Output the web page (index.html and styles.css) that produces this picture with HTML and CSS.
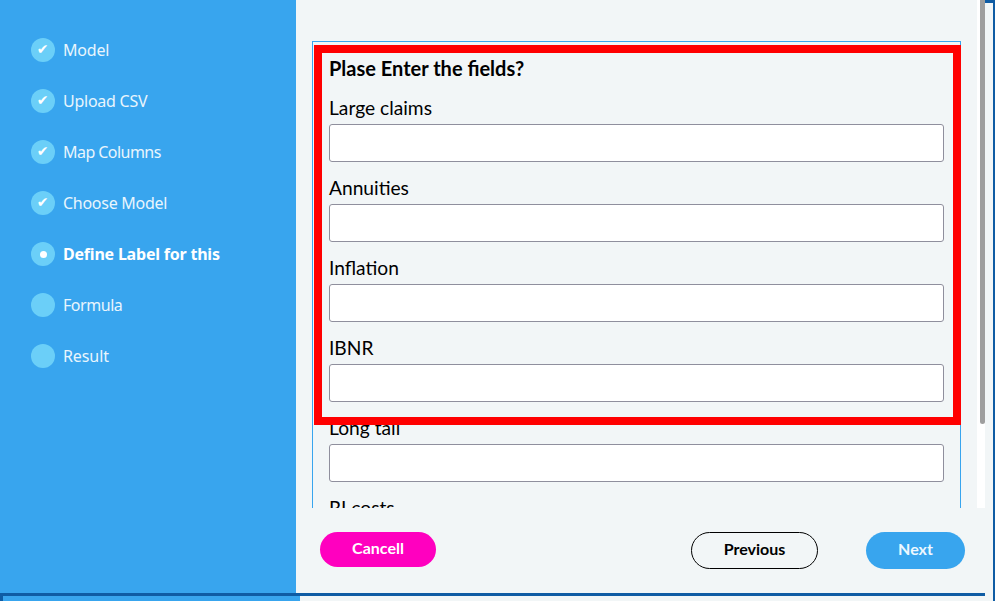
FILE: index.html
```
<!DOCTYPE html>
<html lang="en">
<head>
<meta charset="utf-8">
<title>Define Label</title>
<link rel="stylesheet" href="styles.css">
</head>
<body>
<div class="window">
  <div class="app">
    <nav class="sidebar">
      <div class="step"><span class="dot">✔</span><span class="name model">Model</span></div>
      <div class="step"><span class="dot">✔</span><span class="name upload">Upload CSV</span></div>
      <div class="step"><span class="dot">✔</span><span class="name map">Map Columns</span></div>
      <div class="step"><span class="dot">✔</span><span class="name choose">Choose Model</span></div>
      <div class="step current"><span class="dot"><i class="pip"></i></span><span class="name define">Define Label for this</span></div>
      <div class="step"><span class="dot"></span><span class="name formula">Formula</span></div>
      <div class="step"><span class="dot"></span><span class="name result">Result</span></div>
    </nav>
    <main class="main">
      <div class="scroller">
        <form class="panel">
          <h1>Plase Enter the fields?</h1>
          <label class="field"><span>Large claims</span><input type="text"></label>
          <label class="field"><span>Annuities</span><input type="text"></label>
          <label class="field"><span>Inflation</span><input type="text"></label>
          <label class="field"><span>IBNR</span><input type="text"></label>
          <label class="field"><span>Long tail</span><input type="text"></label>
          <label class="field"><span>RI costs</span><input type="text"></label>
          <div class="highlight"></div>
        </form>
        <div class="track"><div class="thumb"></div></div>
      </div>
      <footer class="actions">
        <button class="btn cancel">Cancell</button>
        <button class="btn previous">Previous</button>
        <button class="btn next">Next</button>
      </footer>
    </main>
  </div>
  <div class="rail"></div>
</div>
<div class="under"><div class="under-side"></div></div>
</body>
</html>
```
FILE: styles.css
```
* { box-sizing: border-box; }
body {
  margin: 0;
  width: 995px;
  height: 601px;
  overflow: hidden;
  background: #f2f6f7;
  color: #000;
  font-family: Lato, Carlito, sans-serif;
}
.window { display: flex; height: 596px; }
.app { display: flex; width: 985px; border-bottom: 3px solid #0f5ca4; }
.rail { width: 10px; border-top: 3px solid #0f5ca4; border-right: 2px solid #0f5ca4; }
.under { height: 5px; border-left: 3px solid #0f5ca4; border-right: 2px solid #0f5ca4; }
.under-side { width: 297px; height: 5px; background: #38a5ee; }

.sidebar {
  width: 296px;
  padding: 38px 0 0 31px;
  background: #38a5ee;
  display: flex;
  flex-direction: column;
  gap: 27px;
}
.step { display: flex; align-items: center; gap: 8px; height: 24px; color: #e9f5fd; }
.dot {
  width: 24px;
  height: 24px;
  border-radius: 50%;
  background: #6bcff8;
  color: #fff;
  display: flex;
  align-items: center;
  justify-content: center;
  padding: 0 1px 1px 0;
  font: 14px/23px "DejaVu Sans", sans-serif;
}
.pip { width: 7px; height: 7px; margin: 1px 0 0 1px; border-radius: 50%; background: #fff; }
.name { font: 16px/24px "Noto Sans", sans-serif; white-space: nowrap; }
.model { letter-spacing: -0.2px; }
.upload { letter-spacing: -0.25px; }
.map { letter-spacing: -0.55px; }
.choose { letter-spacing: -0.27px; }
.define { letter-spacing: -0.21px; }
.formula { letter-spacing: -0.45px; }
.result { letter-spacing: -0.1px; }
.current .name { font-weight: 700; color: #fff; }

.main { width: 689px; display: flex; flex-direction: column; }
.scroller { height: 508px; overflow: hidden; display: flex; justify-content: space-between; }
.panel {
  position: relative;
  width: 649px;
  height: 600px;
  margin: 41px 0 0 16px;
  padding: 12px 16px;
  border: 1px solid #38a5ee;
}
h1 { margin: 0 0 15px; font-size: 20px; line-height: 28px; font-weight: 700; }
.field { display: block; height: 80px; margin-top: -2px; margin-bottom: 2px; font-size: 19.2px; }
.field span { display: block; height: 29px; line-height: 26px; }
.field input {
  display: block;
  width: 615px;
  height: 38px;
  border: 1px solid #8f8f9d;
  border-radius: 3px;
  background: #fff;
}
.highlight {
  position: absolute;
  left: 1px;
  top: 3px;
  width: 647px;
  height: 380px;
  border: 8px solid #f00;
}
.track { width: 8px; background: #fff; display: flex; justify-content: flex-end; }
.thumb { width: 5px; height: 424px; background: #9e9e9e; border-radius: 0 0 3px 3px; }

.actions { display: flex; padding: 24px 20px 0 24px; align-items: flex-start; }
.btn {
  height: 37px;
  padding: 0 0 4px;
  border: 0;
  border-radius: 19px;
  font: 700 16px/20px Lato, sans-serif;
}
.cancel { width: 116px; height: 35px; background: #ff00bf; color: #fff; }
.previous { width: 127px; margin-left: auto; border: 1px solid #000; background: transparent; color: #000; }
.next { width: 99px; margin-left: 48px; background: #38a5ee; color: #eef8ff; }
```
